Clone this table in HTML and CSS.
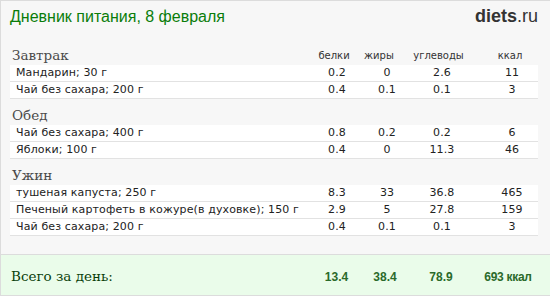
FILE: index.html
```html
<!DOCTYPE html>
<html lang="ru">
<head>
<meta charset="utf-8">
<link rel="stylesheet" href="styles.css">
</head>
<body>
<div class="card">
  <div class="top">
    <div class="title">Дневник питания, 8 февраля</div>
    <div class="logo"><b>diets</b>.ru</div>
  </div>

  <div class="meal">
    <div class="head">
      <div class="meal-name">Завтрак</div>
      <div class="lbl l1">белки</div>
      <div class="lbl l2">жиры</div>
      <div class="lbl l3">углеводы</div>
      <div class="lbl l4">ккал</div>
    </div>
    <div class="row"><div class="nm">Мандарин; 30 г</div><div>0.2</div><div>0</div><div>2.6</div><div class="k">11</div></div>
    <div class="row"><div class="nm">Чай без сахара; 200 г</div><div>0.4</div><div>0.1</div><div>0.1</div><div class="k">3</div></div>
  </div>

  <div class="meal">
    <div class="head"><div class="meal-name">Обед</div></div>
    <div class="row"><div class="nm">Чай без сахара; 400 г</div><div>0.8</div><div>0.2</div><div>0.2</div><div class="k">6</div></div>
    <div class="row"><div class="nm">Яблоки; 100 г</div><div>0.4</div><div>0</div><div>11.3</div><div class="k">46</div></div>
  </div>

  <div class="meal">
    <div class="head"><div class="meal-name">Ужин</div></div>
    <div class="row"><div class="nm">тушеная капуста; 250 г</div><div>8.3</div><div>33</div><div>36.8</div><div class="k">465</div></div>
    <div class="row"><div class="nm">Печеный картофеть в кожуре(в духовке); 150 г</div><div>2.9</div><div>5</div><div>27.8</div><div class="k">159</div></div>
    <div class="row"><div class="nm">Чай без сахара; 200 г</div><div>0.4</div><div>0.1</div><div>0.1</div><div class="k">3</div></div>
  </div>

  <div class="totals">
    <div class="tot-name">Всего за день:</div>
    <div class="tv t1">13.4</div>
    <div class="tv t2">38.4</div>
    <div class="tv t3">78.9</div>
    <div class="tv t4">693 ккал</div>
  </div>
</div>
</body>
</html>
```

FILE: styles.css
```css
html, body {
  margin: 0;
  padding: 0;
  background: #f7f7f7;
}

.card {
  width: 550px;
  height: 296px;
  box-sizing: border-box;
  border: 1px solid #dcdcdc;
  border-right: none;
  background: #f7f7f7;
  display: flex;
  flex-direction: column;
}

.top {
  height: 38px;
  display: flex;
  justify-content: space-between;
  align-items: flex-start;
  padding: 6px 12px 0 9px;
  box-sizing: border-box;
}

.title {
  font-family: "Liberation Sans", Arial, sans-serif;
  font-size: 16px;
  line-height: 19px;
  color: #0a7d0a;
}

.logo {
  font-family: "Liberation Sans", Arial, sans-serif;
  font-size: 18px;
  line-height: 20px;
  color: #333;
  margin-top: -1px;
}

.logo b {
  font-weight: bold;
}

.meal {
  margin: 0 12px 0 9px;
}

.head,
.row,
.totals {
  display: grid;
  grid-template-columns: 1fr 50px 50px 60px 66px;
}

.head {
  height: 26px;
  box-sizing: border-box;
  padding-top: 7px;
}

.meal-name {
  font-family: "DejaVu Serif", Georgia, serif;
  font-size: 13.5px;
  line-height: 18px;
  color: #4a4a4a;
  padding-left: 2px;
}

.lbl {
  font-family: "DejaVu Sans", Verdana, sans-serif;
  font-size: 10px;
  line-height: 18px;
  color: #333;
  text-align: center;
  padding-top: 1px;
}

.l1 { padding-right: 6px; }
.l2 { padding-right: 16px; }
.l3 { padding-right: 7px; }
.l4 { padding-left: 14px; padding-right: 4px; }

.row {
  height: 17px;
  box-sizing: border-box;
  background: #fff;
  border-bottom: 1px solid #e2e2e2;
  font-family: "DejaVu Sans", Verdana, sans-serif;
  font-size: 11px;
  line-height: 16px;
  letter-spacing: 0.12px;
  color: #222;
}

.row > div {
  text-align: center;
  white-space: nowrap;
}

.row > .nm {
  text-align: left;
  padding-left: 6px;
}

.row > .k {
  padding-left: 14px;
}

.totals {
  margin-top: auto;
  height: 41px;
  box-sizing: border-box;
  border-top: 1px solid #dcdcdc;
  background: #eafcea;
  padding: 11px 12px 0 9px;
  align-items: start;
}

.tot-name {
  font-family: "DejaVu Serif", Georgia, serif;
  font-size: 13.5px;
  line-height: 20px;
  color: #0a3f0a;
  padding-left: 1px;
}

.tv {
  font-family: "Liberation Sans", Arial, sans-serif;
  font-size: 12px;
  font-weight: bold;
  line-height: 18px;
  color: #2a6a2a;
  text-align: center;
  white-space: nowrap;
  padding-top: 2px;
}

.t1 { padding-right: 1px; }
.t2 { padding-right: 4px; }
.t3 { padding-right: 2px; }
.t4 { padding-left: 6px; letter-spacing: -0.3px; }
```
